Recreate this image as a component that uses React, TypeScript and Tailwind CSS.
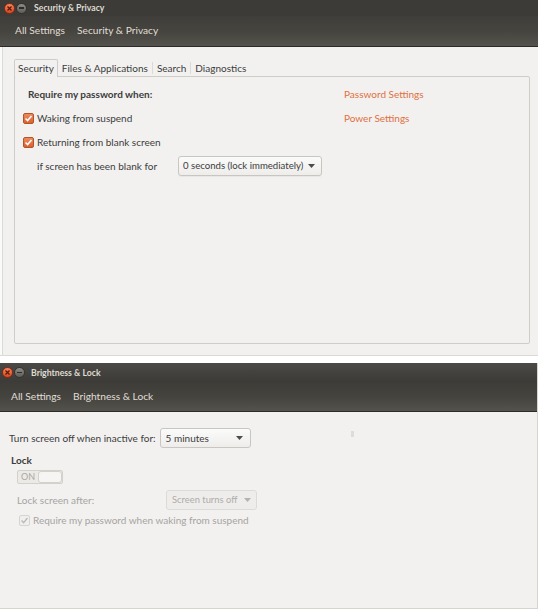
import React from "react";

const font = { fontFamily: 'Lato, "Noto Sans", sans-serif' };

function WinButtons() {
  return (
    <div className="flex items-center gap-[1px]">
      <div className="w-[11px] h-[11px] rounded-full bg-gradient-to-b from-[#f5845f] to-[#d9481e] border border-[#8a2a10] flex items-center justify-center">
        <svg width="7" height="7" viewBox="0 0 7 7">
          <path d="M1.5 1.5 L5.5 5.5 M5.5 1.5 L1.5 5.5" stroke="#5a1a08" strokeWidth="1.3" />
        </svg>
      </div>
      <div className="w-[11px] h-[11px] rounded-full bg-gradient-to-b from-[#8d8c87] to-[#5e5d58] border border-[#333] flex items-center justify-center">
        <div className="w-[5px] h-[1.5px] bg-[#2e2d2a]" />
      </div>
    </div>
  );
}

function Checkbox({ disabled }: { disabled?: boolean }) {
  if (disabled) {
    return (
      <div className="w-[11px] h-[11px] rounded-[2px] border border-[#d6d4d0] bg-[#f0efed] flex items-center justify-center">
        <svg width="9" height="9" viewBox="0 0 9 9">
          <path d="M1.5 4.5 L3.6 6.6 L7.5 2" stroke="#bdbab4" strokeWidth="1.4" fill="none" />
        </svg>
      </div>
    );
  }
  return (
    <div className="w-[11px] h-[11px] rounded-[2px] border border-[#b3532a] bg-gradient-to-b from-[#ec8a5c] to-[#d9622f] flex items-center justify-center">
      <svg width="9" height="9" viewBox="0 0 9 9">
        <path d="M1.5 4.5 L3.6 6.6 L7.5 2" stroke="#fff" strokeWidth="1.5" fill="none" />
      </svg>
    </div>
  );
}

function Arrow({ color = "#4c4c4c" }: { color?: string }) {
  return (
    <svg width="7" height="4" viewBox="0 0 7 4" className="shrink-0">
      <path d="M0 0 L7 0 L3.5 4 Z" fill={color} />
    </svg>
  );
}

export default function App() {
  return (
    <div className="w-[540px] h-[610px] bg-white overflow-hidden text-[10px] text-[#3c3c3c] whitespace-nowrap" style={font}>
      {/* Top window */}
      <div className="w-[538px] h-[356px] flex flex-col bg-[#f2f1f0] border-b border-[#dcdad5]">
        <div className="h-[16px] bg-[#3c3b37] flex items-center pl-[4px]">
          <WinButtons />
          <span className="text-[#dfdbd2] font-bold text-[8.7px] pl-[7px]">Security &amp; Privacy</span>
        </div>
        <div className="h-[31px] bg-gradient-to-b from-[#3f3e3a] via-[#45443f] to-[#53524c] border-b border-[#2c2b28] flex items-center gap-[12px] pl-[15px] text-[#e0ddd6] text-[10.2px]">
          <span>All Settings</span>
          <span>Security &amp; Privacy</span>
        </div>
        <div className="flex-1 flex border-l-[2px] border-l-[#fafaf9]">
          <div className="flex-1 flex flex-col pt-[12px] pl-[11px] pr-[8px] pb-[11px] border-l border-[#dcdad5]">
            <div className="flex items-end h-[17px] text-[#3c3c3c]">
              <div className="h-[18px] px-[3px] border border-b-0 border-[#cfcdc8] rounded-t-[2px] bg-[#f2f1f0] flex items-center relative z-10 -mb-px">
                Security
              </div>
              <div className="px-[4px] h-[16px] flex items-center">Files &amp; Applications</div>
              <div className="w-px h-[12px] bg-[#dcdad5] mb-[2px]" />
              <div className="px-[4px] h-[16px] flex items-center">Search</div>
              <div className="w-px h-[12px] bg-[#dcdad5] mb-[2px]" />
              <div className="px-[4px] h-[16px] flex items-center">Diagnostics</div>
            </div>
            <div className="flex-1 border border-[#cfcdc8] rounded-[2px] bg-[#f2f1f0] flex pt-[10px]">
              <div className="w-[329px] flex flex-col pl-[8px]">
                <div className="h-[14px] flex items-center pl-[5px] font-bold">Require my password when:</div>
                <div className="h-[14px] mt-[10px] flex items-center gap-[3px]">
                  <Checkbox />
                  <span>Waking from suspend</span>
                </div>
                <div className="h-[14px] mt-[10px] flex items-center gap-[3px]">
                  <Checkbox />
                  <span>Returning from blank screen</span>
                </div>
                <div className="mt-[7px] flex items-center pl-[14px]">
                  <span className="w-[141px]">if screen has been blank for</span>
                  <div className="h-[20px] w-[144px] border border-[#c8c6c1] rounded-[3px] bg-gradient-to-b from-[#fbfbfa] to-[#eeedeb] flex items-center justify-between gap-[4px] pl-[4px] pr-[6px] text-[9.6px] shadow-[0_1px_0_rgba(0,0,0,0.04)]">
                    <span>0 seconds (lock immediately)</span>
                    <Arrow />
                  </div>
                </div>
              </div>
              <div className="flex flex-col text-[#e0703f]">
                <div className="h-[14px] flex items-center">Password Settings</div>
                <div className="h-[14px] mt-[10px] flex items-center">Power Settings</div>
              </div>
            </div>
          </div>
        </div>
      </div>

      {/* Bottom window */}
      <div className="mt-[7px] w-[538px] h-[246px] flex flex-col bg-[#f2f1f0] border-r border-b border-[#d6d4cf]">
        <div className="h-[19px] bg-gradient-to-b from-[#4a4945] to-[#3c3b37] flex items-center pl-[2px]">
          <WinButtons />
          <span className="text-[#dfdbd2] font-bold text-[8.7px] pl-[6px]">Brightness &amp; Lock</span>
        </div>
        <div className="h-[30px] bg-gradient-to-b from-[#3d3c38] via-[#44433e] to-[#53524c] border-b border-[#2c2b28] flex items-center gap-[12px] pl-[11px] text-[#e0ddd6] text-[10.2px]">
          <span>All Settings</span>
          <span>Brightness &amp; Lock</span>
        </div>
        <div className="flex-1 flex flex-col pt-[16px] pl-[9px] relative">
          <div className="flex items-center gap-[4px]">
            <span>Turn screen off when inactive for:</span>
            <div className="h-[20px] w-[91px] border border-[#c8c6c1] rounded-[3px] bg-gradient-to-b from-[#fbfbfa] to-[#eeedeb] flex items-center justify-between pl-[5px] pr-[7px]">
              <span>5 minutes</span>
              <Arrow />
            </div>
          </div>
          <div className="absolute left-[351px] top-[19px] w-[3px] h-[6px] bg-[#dedcd8]" />
          <div className="mt-[5px] pl-[2px] font-bold">Lock</div>
          <div className="mt-[2px] ml-[8px] w-[46px] h-[14px] border border-[#d3d1cc] rounded-[2px] bg-[#eceae7] flex items-center">
            <span className="pl-[3px] w-[20px] text-[9px] text-[#a9a7a2]">ON</span>
            <div className="flex-1 h-[12px] border border-[#d3d1cc] rounded-[3px] bg-[#f6f5f3]" />
          </div>
          <div className="mt-[6px] flex items-center pl-[8px] text-[#a6a4a0]">
            <span className="w-[149px]">Lock screen after:</span>
            <div className="h-[20px] w-[91px] border border-[#dddbd7] rounded-[3px] bg-[#eeedeb] flex items-center justify-between gap-[3px] pl-[5px] pr-[5px] text-[9.4px] text-[#aeaca8]">
              <span>Screen turns off</span>
              <Arrow color="#b5b3ae" />
            </div>
          </div>
          <div className="mt-[3px] pl-[10px] flex items-center gap-[3px] text-[#a6a4a0]">
            <Checkbox disabled />
            <span>Require my password when waking from suspend</span>
          </div>
        </div>
      </div>
    </div>
  );
}
